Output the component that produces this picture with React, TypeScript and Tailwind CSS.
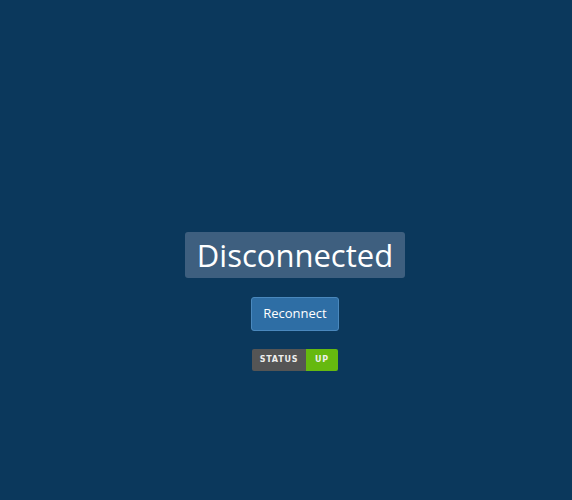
export default function App() {
  return (
    <main className="min-h-[500px] w-full bg-[#0b385c] flex flex-col items-center pt-[232px] pl-[18px] font-['Open_Sans',sans-serif]">
      <h1 className="h-[46px] flex items-center justify-center rounded-[3px] bg-[#3e5f7f] px-[12px] text-[31px] leading-none text-white">
        Disconnected
      </h1>
      <button className="mt-[19px] h-[34px] w-[88px] rounded-[3px] border border-[#4a88bd] bg-[#2e6ea5] text-[13px] text-white">
        Reconnect
      </button>
      <div className="mt-[18px] flex h-[22px] overflow-hidden rounded-[2px] font-['DejaVu_Sans',sans-serif] text-[8px] font-bold tracking-[0.8px] text-[#eeeeee]">
        <span className="flex w-[54px] items-center justify-center bg-[#555555]">STATUS</span>
        <span className="flex w-[32px] items-center justify-center bg-[#66b90f]">UP</span>
      </div>
    </main>
  );
}
